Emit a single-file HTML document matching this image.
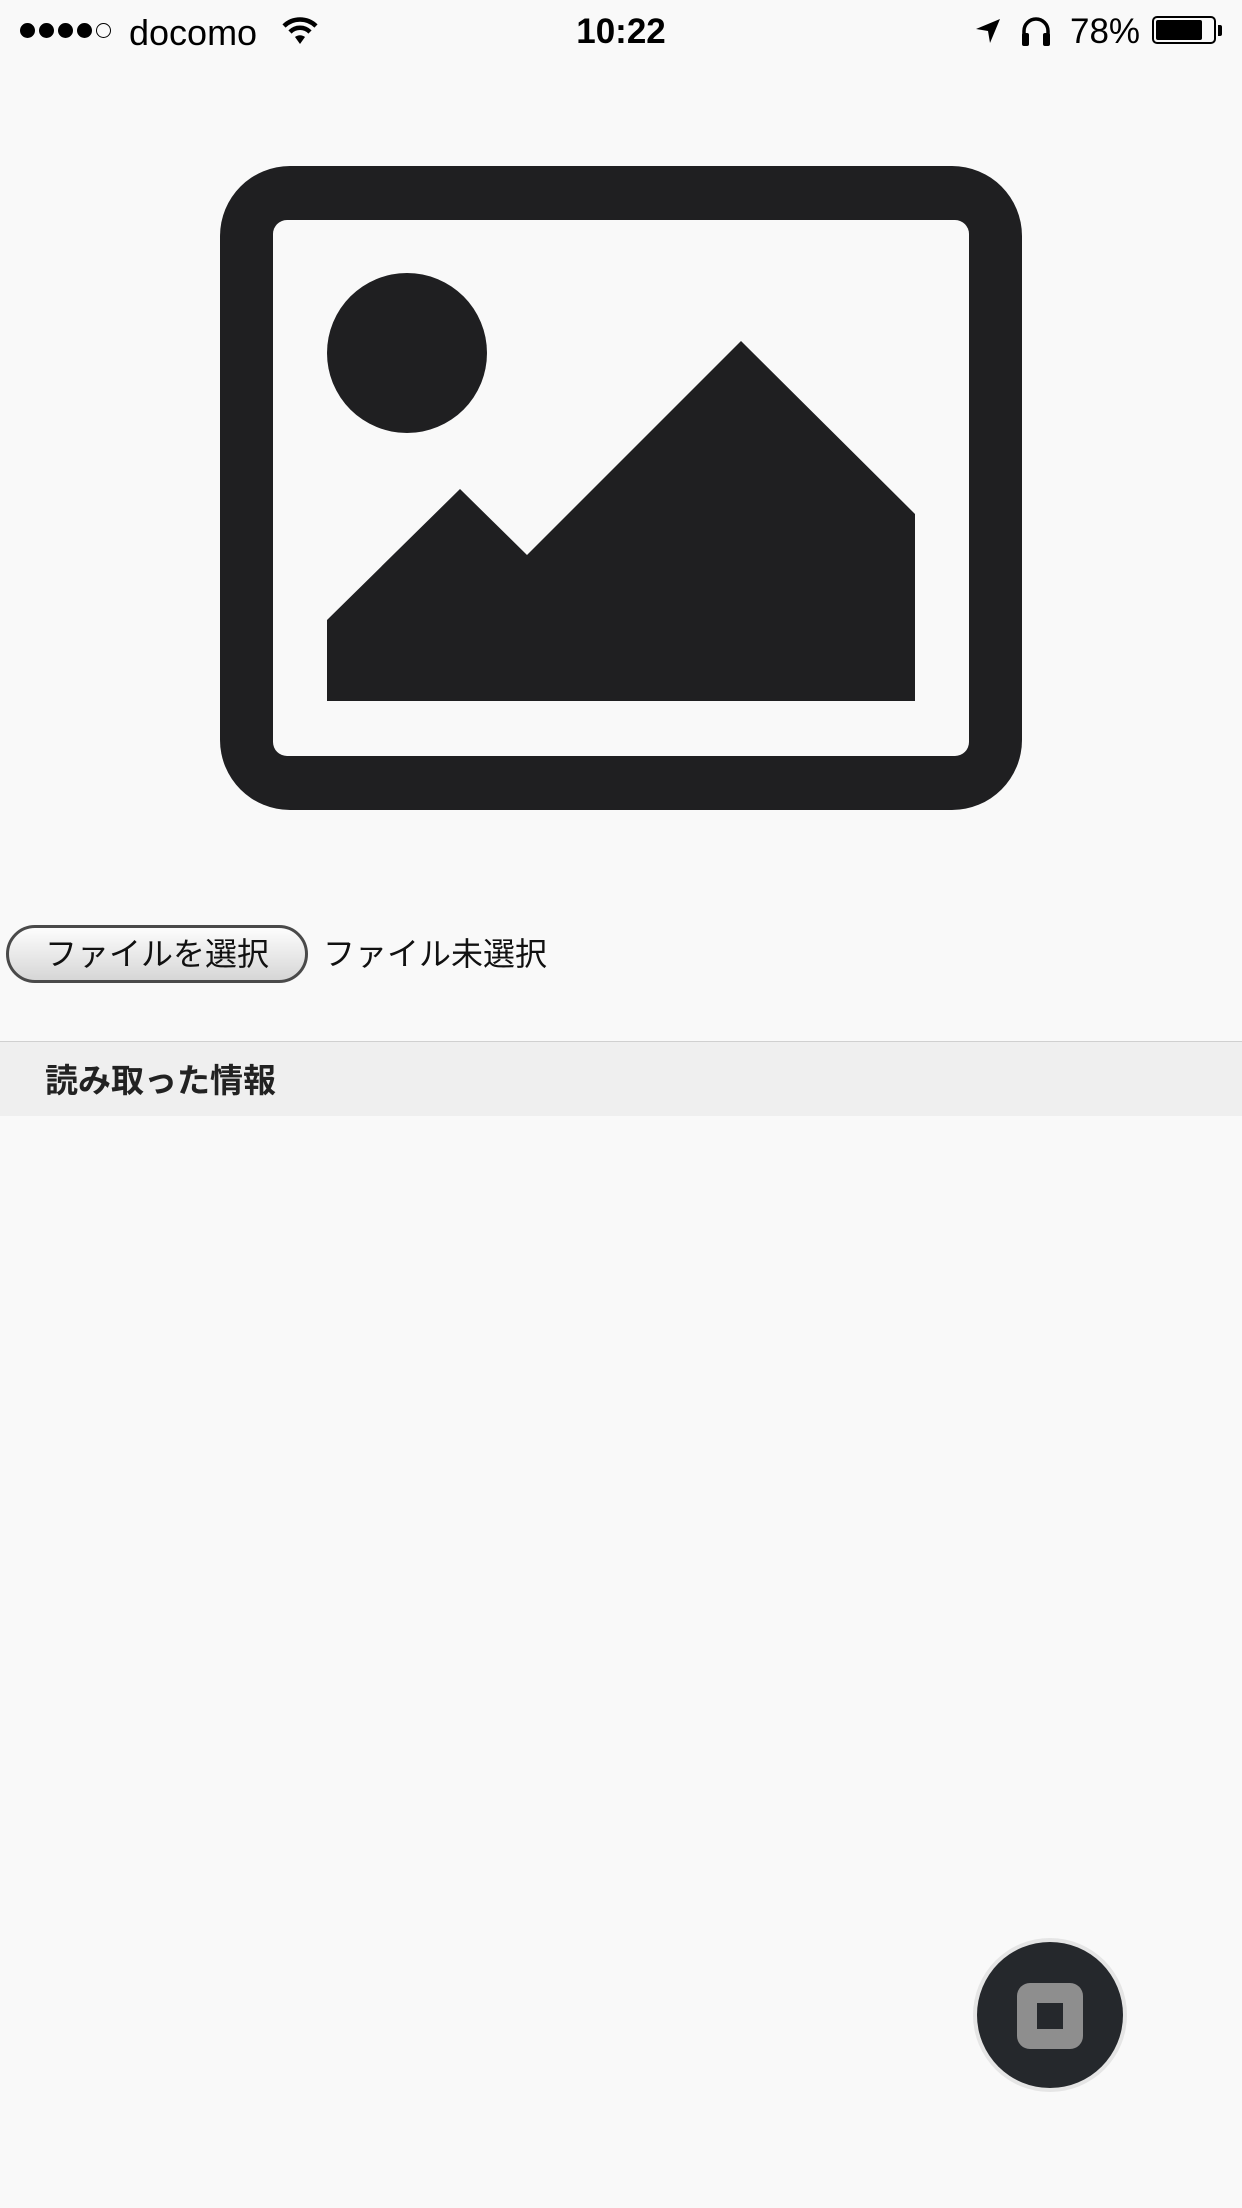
<!DOCTYPE html>
<html><head><meta charset="utf-8"><style>
html,body{margin:0;padding:0;width:1242px;height:2208px;background:#f9f9f9;overflow:hidden;position:relative;font-family:"Liberation Sans","Noto Sans CJK JP",sans-serif;color:#111}
.abs{position:absolute}
</style></head><body>
<!-- status bar -->
<div class="abs" style="left:20px;top:23px;font-size:0">
<span style="display:inline-block;width:15px;height:15px;border-radius:50%;background:#000;margin-right:4px"></span><span style="display:inline-block;width:15px;height:15px;border-radius:50%;background:#000;margin-right:4px"></span><span style="display:inline-block;width:15px;height:15px;border-radius:50%;background:#000;margin-right:4px"></span><span style="display:inline-block;width:15px;height:15px;border-radius:50%;background:#000;margin-right:4px"></span><span style="display:inline-block;width:13px;height:13px;border-radius:50%;border:1px solid #000"></span>
</div>
<div class="abs" style="left:129px;top:12px;font-size:36px;color:#000">docomo</div>
<svg class="abs" style="left:282px;top:16px" width="36" height="30" viewBox="0 0 36 30"><path d="M2 10 A23 23 0 0 1 34 10" stroke="#000" stroke-width="4.5" fill="none"/><path d="M8 16 A14 14 0 0 1 28 16" stroke="#000" stroke-width="4.5" fill="none"/><path d="M13 21 L18 28 L23 21 A8 8 0 0 0 13 21Z" fill="#000"/></svg>
<div class="abs" style="left:0;width:1242px;text-align:center;top:12px;font-size:35px;font-weight:bold;color:#000">10:22</div>
<svg class="abs" style="left:974px;top:17px" width="28" height="28" viewBox="0 0 28 28"><path d="M26 2 L2 12 L14 14 L16 26Z" fill="#000"/></svg>
<svg class="abs" style="left:1019px;top:14px" width="34" height="34" viewBox="0 0 34 34"><path d="M5 28 V17 A12 12 0 0 1 29 17 V28" stroke="#000" stroke-width="3.5" fill="none"/><rect x="3" y="19" width="7" height="13" rx="2" fill="#000"/><rect x="24" y="19" width="7" height="13" rx="2" fill="#000"/></svg>
<div class="abs" style="left:1070px;top:12px;font-size:35px;color:#000">78%</div>
<div class="abs" style="left:1152px;top:16px;width:64px;height:28px;border:2px solid #000;border-radius:5px;box-sizing:border-box;padding:2px"><div style="width:46px;height:20px;background:#000;border-radius:2px"></div></div>
<div class="abs" style="left:1218px;top:25px;width:4px;height:11px;background:#000;border-radius:0 2px 2px 0"></div>
<!-- image icon -->
<svg class="abs" style="left:0;top:0" width="1242" height="900">
<rect x="220" y="166" width="802" height="644" rx="70" fill="#1f1f21"/>
<rect x="273" y="220" width="696" height="536" rx="14" fill="#f9f9f9"/>
<circle cx="407" cy="353" r="80" fill="#1f1f21"/>
<path d="M327 620 L460 489 L527 555 L741 341 L915 514 L915 701 L327 701Z" fill="#1f1f21"/>
</svg>
<!-- file input -->
<div class="abs" style="left:6px;top:925px;width:302px;height:58px;box-sizing:border-box;border:3px solid #4a4a4a;border-radius:29px;background:linear-gradient(#fdfdfd,#d6d6d6);font-size:32px;line-height:52px;text-align:center;color:#111">ファイルを選択</div>
<div class="abs" style="left:323px;top:925px;font-size:32px;line-height:58px;color:#111">ファイル未選択</div>
<!-- section header -->
<div class="abs" style="left:0;top:1041px;width:1242px;height:1px;background:#d0d0d0"></div>
<div class="abs" style="left:0;top:1042px;width:1242px;height:74px;background:#efefef"></div>
<div class="abs" style="left:45px;top:1044px;font-size:33px;font-weight:bold;line-height:74px;color:#222">読み取った情報</div>
<!-- assistive touch -->
<div class="abs" style="left:973px;top:1938px;width:154px;height:154px;border-radius:50%;background:#e5e5e5"></div>
<div class="abs" style="left:977px;top:1942px;width:146px;height:146px;border-radius:50%;background:#25282c"></div>
<div class="abs" style="left:1017px;top:1983px;width:66px;height:66px;border-radius:13px;background:#8e8e8e"></div>
<div class="abs" style="left:1037px;top:2003px;width:26px;height:26px;background:#25282c"></div>
</body></html>
